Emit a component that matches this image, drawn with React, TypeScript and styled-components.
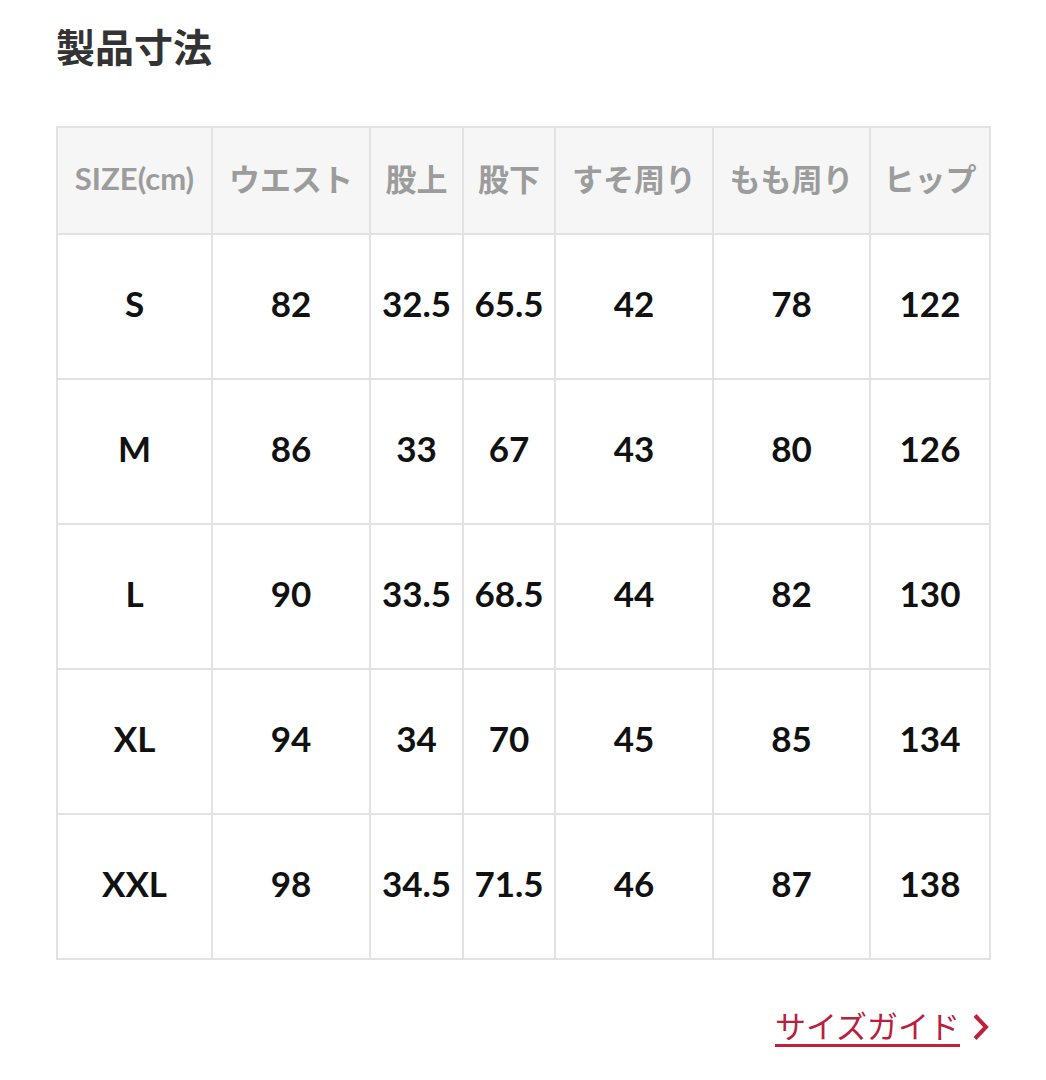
import styled, { createGlobalStyle } from 'styled-components';

const GlobalStyle = createGlobalStyle`
  body {
    margin: 0;
    background: #fff;
    font-family: Lato, "Noto Sans CJK JP", sans-serif;
  }
`;

const columns = [
  { label: 'SIZE(cm)', width: 155 },
  { label: 'ウエスト', width: 158 },
  { label: '股上', width: 93 },
  { label: '股下', width: 92 },
  { label: 'すそ周り', width: 158 },
  { label: 'もも周り', width: 157 },
  { label: 'ヒップ', width: 120 },
];

const rows = [
  ['S', '82', '32.5', '65.5', '42', '78', '122'],
  ['M', '86', '33', '67', '43', '80', '126'],
  ['L', '90', '33.5', '68.5', '44', '82', '130'],
  ['XL', '94', '34', '70', '45', '85', '134'],
  ['XXL', '98', '34.5', '71.5', '46', '87', '138'],
];

const App = () => {
  return (
    <StyledPage>
      <GlobalStyle />
      <Title>製品寸法</Title>
      <SizeTable>
        <colgroup>
          {columns.map(c => <col key={c.label} style={{ width: c.width }} />)}
        </colgroup>
        <thead>
          <tr>
            {columns.map(c => <HeadCell key={c.label}>{c.label}</HeadCell>)}
          </tr>
        </thead>
        <tbody>
          {rows.map(r => (
            <tr key={r[0]}>
              {r.map((v, i) => <Cell key={i}>{v}</Cell>)}
            </tr>
          ))}
        </tbody>
      </SizeTable>
      <Footer>
        <GuideLink href="#">
          <span className="label">サイズガイド</span>
          <svg width="18" height="28" viewBox="0 0 18 28">
            <path d="M3 2.5 L14 14 L3 25.5" fill="none" stroke="#c0203c" strokeWidth="4" />
          </svg>
        </GuideLink>
      </Footer>
    </StyledPage>
  );
};

const StyledPage = styled.div`
  width: 1046px;
  height: 1080px;
  padding: 22px 56px 0 56px;
  box-sizing: border-box;
`;

const Title = styled.h1`
  margin: 0;
  font-family: "Noto Sans CJK JP", sans-serif;
  font-size: 39px;
  font-weight: 700;
  color: #333;
  line-height: 46px;
`;

const SizeTable = styled.table`
  margin-top: 58px;
  width: 934px;
  table-layout: fixed;
  border-collapse: collapse;
  border: 2px solid #e2e2e2;
`;

const HeadCell = styled.th`
  height: 99px;
  padding: 0 0 6px 0;
  background: #f6f6f6;
  border: 2px solid #e2e2e2;
  color: #9c9c9c;
  font-size: 31px;
  font-weight: 700;
  text-align: center;
  white-space: nowrap;
`;

const Cell = styled.td`
  height: 135px;
  padding: 0 0 8px 0;
  border: 2px solid #e2e2e2;
  color: #111;
  font-size: 35px;
  font-weight: 700;
  text-align: center;
  white-space: nowrap;
`;

const Footer = styled.div`
  display: flex;
  justify-content: flex-end;
  margin-top: 46px;
`;

const GuideLink = styled.a`
  display: flex;
  align-items: center;
  gap: 12px;
  text-decoration: none;
  color: #b8203e;
  .label {
    font-family: "Noto Sans CJK JP", sans-serif;
    font-size: 31px;
    line-height: 38px;
    border-bottom: 3px solid #c0203c;
  }
`;

export default App;
